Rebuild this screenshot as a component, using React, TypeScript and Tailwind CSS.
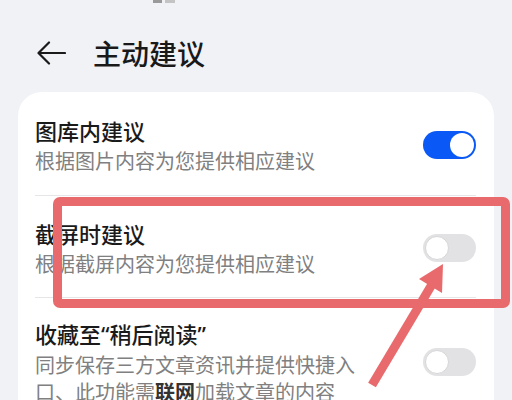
import React from 'react';

const cjk = { fontFamily: '"Noto Sans CJK SC", "Noto Sans", sans-serif' };

const Toggle: React.FC<{ on?: boolean }> = ({ on }) => (
  <div
    className={`flex h-[28px] w-[53px] shrink-0 items-center rounded-full p-[2px] ${
      on ? 'justify-end bg-[#0a59f7]' : 'justify-start bg-[#e2e2e4]'
    }`}
  >
    <div className={`h-[24px] w-[24px] rounded-full bg-white ${on ? '' : 'border border-[#d6d6d8]'}`} />
  </div>
);

const Q: React.FC<{ children: React.ReactNode }> = ({ children }) => (
  <span style={{ fontFamily: '"Noto Sans", sans-serif' }}>{children}</span>
);

const App: React.FC = () => {
  return (
    <div className="relative h-[400px] w-[512px] overflow-hidden bg-[#f1f2f6]" style={cjk}>
      {/* clipped status bar bits */}
      <div className="flex h-[30px] items-start gap-[3px] pl-[153px]">
        <div className="h-[3px] w-[9px] bg-[#9a9a9a]" />
        <div className="h-[3px] w-[10px] bg-[#c4c4c4]" />
      </div>

      <div className="flex h-[46px] items-center pl-[37px]">
        <svg width="29" height="24" viewBox="0 0 29 24" fill="none" stroke="#1a1a1a" strokeWidth="2.2" strokeLinecap="round" strokeLinejoin="round">
          <path d="M28 12H2M12 1.5L1.5 12L12 22.5" />
        </svg>
        <h1 className="ml-[27px] text-[28px] font-medium leading-none text-[#191919]">主动建议</h1>
      </div>

      <div className="mx-[18px] mt-[16px] rounded-[24px] bg-white px-[17px] pr-[18px]">
        <div className="flex items-center justify-between pt-[23px] pb-[21px]">
          <div>
            <div className="text-[22px] font-medium leading-[30px] text-[#1a1a1a]">图库内建议</div>
            <div className="mt-[2px] text-[20px] leading-[27px] text-[#808080]">根据图片内容为您提供相应建议</div>
          </div>
          <Toggle on />
        </div>
        <div className="h-px bg-[#e6e6e8]" />
        <div className="flex items-center justify-between pt-[22px] pb-[20px]">
          <div>
            <div className="text-[22px] font-medium leading-[30px] text-[#1a1a1a]">截屏时建议</div>
            <div className="mt-[2px] text-[20px] leading-[27px] text-[#808080]">根据截屏内容为您提供相应建议</div>
          </div>
          <Toggle />
        </div>
        <div className="h-px bg-[#e6e6e8]" />
        <div className="flex items-center justify-between pt-[20px] pb-[20px]">
          <div className="w-[330px]">
            <div className="text-[22px] font-medium leading-[30px] text-[#1a1a1a]">
              收藏至<Q>“</Q>稍后阅读<Q>”</Q>
            </div>
            <div className="mt-[2px] text-[20px] leading-[27px] text-[#808080]">
              同步保存三方文章资讯并提供快捷入口、此功能需<span className="font-bold text-[#333]">联网</span>加载文章的内容
            </div>
          </div>
          <Toggle />
        </div>
      </div>

      {/* annotation overlay */}
      <div className="absolute left-[53px] top-[197px] h-[111px] w-[457px] rounded-[7px] border-[9px] border-[#e96a6c]" />
      <svg className="absolute left-0 top-0" width="512" height="400" viewBox="0 0 512 400">
        <line x1="372" y1="385" x2="434" y2="281" stroke="#e96a6c" strokeWidth="9" />
        <polygon points="443,264 419,279 442,293" fill="#e96a6c" />
      </svg>
    </div>
  );
};

export default App;
